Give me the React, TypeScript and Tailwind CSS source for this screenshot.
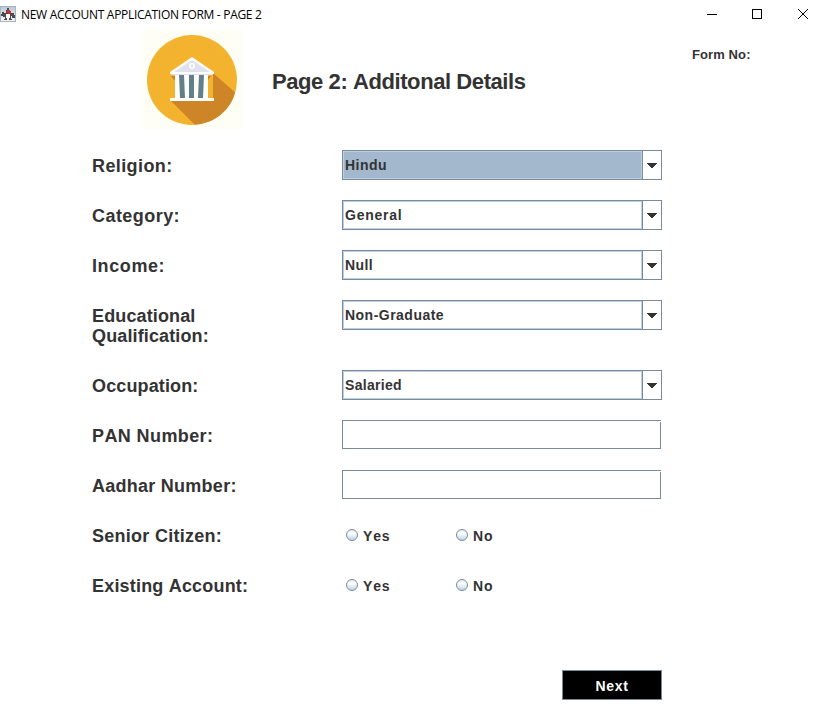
import React from "react";

function AppIcon() {
  return (
    <svg width="16" height="16" viewBox="0 0 16 16" className="block" shapeRendering="crispEdges">
      <defs>
        <linearGradient id="tile" x1="0" y1="0" x2="0" y2="1">
          <stop offset="0" stopColor="#b9cad9" />
          <stop offset="1" stopColor="#f0f3f5" />
        </linearGradient>
      </defs>
      <rect width="16" height="16" fill="#a9b4bd" />
      <rect x="1" y="1" width="14" height="14" fill="url(#tile)" />
      <path d="M7 2h2v2h1v2h1v1h3v2h1v3h-3v-2h-1v3h1v1H9v-1H7v1H4v-1h1v-2H3v-1H1V8h1V6h2v1h2V4h1z" fill="#4b4b4f" />
      <path d="M6 8h4v4H9v1H7v-1H6z" fill="#f7f7f7" />
      <path d="M7 4h3v1h1v2h-1v1H8V7H7z" fill="#d32b30" />
    </svg>
  );
}

function BankLogo() {
  return (
    <svg width="101" height="99" viewBox="0 0 101 99" className="block">
      <rect width="101" height="99" fill="#fffef4" />
      <clipPath id="disc">
        <circle cx="50" cy="50" r="45" />
      </clipPath>
      <circle cx="50" cy="50" r="45" fill="#f4b32f" />
      <path clipPath="url(#disc)" d="M28 70L58 100H110V77L71 43V70z" fill="#cd8527" />
      <path d="M29 46h40l-3 4H32z" fill="#cd8527" />
      <rect x="33" y="45" width="33" height="24" fill="#62808a" />
      <path d="M33 45h4l1 23h-5zM42 45h5v23h-4zM52 45h5l-1 23h-4zM62 45h4v23h-5z" fill="#fffefa" />
      <path d="M50 27L72 42v2H28v-2z" fill="#fffefa" />
      <path d="M50 30L68 42H32z" fill="#dfe2ee" />
      <rect x="28" y="42" width="44" height="2" fill="#fffefa" />
      <rect x="29" y="44" width="42" height="1" fill="#dfe2ee" />
      <circle cx="50" cy="36" r="2.2" fill="#dfe2ee" stroke="#fffefa" strokeWidth="1.5" />
      <rect x="28" y="68" width="44" height="3" fill="#fffefa" />
    </svg>
  );
}

function WindowControls() {
  return (
    <svg width="104" height="12" viewBox="0 0 104 12" className="block" fill="none" stroke="#000">
      <path d="M0 6.5h10" />
      <rect x="45.5" y="1.5" width="9" height="9" />
      <path d="M91 1l10 10M101 1L91 11" />
    </svg>
  );
}

function Row({ label, spacing, height = "h-[50px]", children }: {
  label: React.ReactNode; spacing: string; height?: string; children: React.ReactNode;
}) {
  return (
    <div className={`flex items-start ${height}`}>
      <div className={`w-[250px] shrink-0 pt-[6px] text-[18px] leading-[20px] ${spacing}`}>{label}</div>
      {children}
    </div>
  );
}

function Combo({ value, spacing, focused = false }: { value: string; spacing: string; focused?: boolean }) {
  return (
    <button className="flex h-[30px] w-[320px] border border-[#7a8a99] text-left text-[14px] leading-[26px]">
      <span className={`h-[28px] w-[300px] border border-[#b8cfe5] pl-px ${spacing} ${focused ? "bg-[#a3b8cc]" : "bg-white"}`}>
        {value}
      </span>
      <span className="flex h-[28px] w-[19px] justify-center border-l border-[#7a8a99] pt-[12px]">
        <svg width="10" height="5" viewBox="0 0 10 5" shapeRendering="crispEdges" className="block">
          <path d="M0 0h10v1H9v1H8v1H7v1H6v1H4V4H3V3H2V2H1V1H0z" fill="#333" />
        </svg>
      </span>
    </button>
  );
}

function Field() {
  return (
    <svg width="320" height="30" className="block" fill="none" stroke="#7a8a99" shapeRendering="crispEdges">
      <path d="M0 .5h319M.5 0v29M1 28.5h318M318.5 2v27" />
    </svg>
  );
}

function Radio({ label }: { label: string }) {
  return (
    <div className="flex w-[110px] pl-1 pt-[9px]">
      <svg width="12" height="12" viewBox="0 0 12 12" className="block shrink-0">
        <defs>
          <linearGradient id="metal" x1="0" y1="0" x2="0" y2="1">
            <stop offset="0" stopColor="#dde8f3" />
            <stop offset=".35" stopColor="#fff" />
            <stop offset="1" stopColor="#b8cfe5" />
          </linearGradient>
        </defs>
        <circle cx="6" cy="6" r="5.5" fill="url(#metal)" stroke="#7a8a99" />
      </svg>
      <span className="ml-[5px] text-[14px] leading-[14px] tracking-[0.8px]">{label}</span>
    </div>
  );
}

function YesNo() {
  return (
    <div className="flex">
      <Radio label="Yes" />
      <Radio label="No" />
    </div>
  );
}

export default function App() {
  return (
    <div className="h-[723px] w-[825px] overflow-hidden bg-white font-['Liberation_Sans',Arial,sans-serif] font-bold text-[#333] [font-kerning:none]">
      <header className="flex h-[30px] items-start justify-between">
        <div className="flex pt-[6px]">
          <AppIcon />
          <span className="ml-[5px] whitespace-nowrap font-['Open_Sans','Noto_Sans',sans-serif] text-[12px] leading-[17px] font-normal tracking-[-0.3px] text-black">
            NEW ACCOUNT APPLICATION FORM - PAGE 2
          </span>
        </div>
        <div className="pt-[8px] pr-[14px]">
          <WindowControls />
        </div>
      </header>

      <section className="flex h-[120px] items-start pl-[142px]">
        <BankLogo />
        <h1 className="w-[449px] pl-[29px] pt-[39px] text-[22px] leading-[26px] tracking-[-0.42px]">Page 2: Additonal Details</h1>
        <span className="pt-[17px] text-[13px] leading-[16px] tracking-[0.1px]">Form No:</span>
      </section>

      <main className="pl-[92px]">
        <Row label="Religion:" spacing="tracking-[0.4px]"><Combo value="Hindu" spacing="tracking-[0.45px]" focused /></Row>
        <Row label="Category:" spacing="tracking-[0.45px]"><Combo value="General" spacing="tracking-[0.75px]" /></Row>
        <Row label="Income:" spacing="tracking-[0.6px]"><Combo value="Null" spacing="tracking-[0.4px]" /></Row>
        <Row label={<>Educational<br />Qualification:</>} spacing="tracking-[0.13px]" height="h-[70px]">
          <Combo value="Non-Graduate" spacing="tracking-[0.48px]" />
        </Row>
        <Row label="Occupation:" spacing="tracking-[0.13px]"><Combo value="Salaried" spacing="tracking-[0.3px]" /></Row>
        <Row label="PAN Number:" spacing="tracking-[0.4px]"><Field /></Row>
        <Row label="Aadhar Number:" spacing="tracking-[0.26px]"><Field /></Row>
        <Row label="Senior Citizen:" spacing="tracking-[0.27px]"><YesNo /></Row>
        <Row label="Existing Account:" spacing="tracking-[0.19px]"><YesNo /></Row>
        <div className="pl-[470px] pt-[50px]">
          <button className="h-[30px] w-[100px] border border-[#7a8a99] bg-black pt-[2px] text-[14px] leading-[26px] tracking-[0.7px] text-white">Next</button>
        </div>
      </main>
    </div>
  );
}
